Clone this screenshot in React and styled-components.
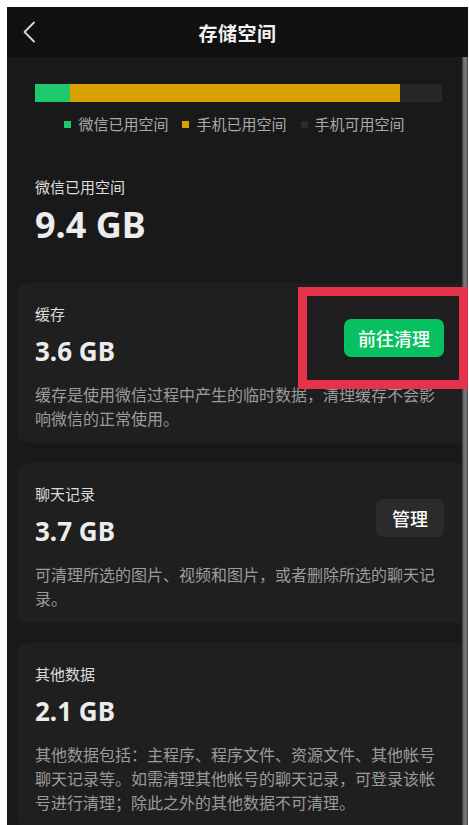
import React from "react";
import styled, { createGlobalStyle } from "styled-components";

const GlobalStyle = createGlobalStyle`
    html, body {
        margin: 0;
        padding: 0;
        background: #ffffff;
    }
    body {
        font-family: "Noto Sans CJK SC", "Noto Sans", sans-serif;
    }
`;

const cards = [
    {
        title: "缓存",
        size: "3.6 GB",
        desc: "缓存是使用微信过程中产生的临时数据，清理缓存不会影响微信的正常使用。",
        action: "前往清理",
        primary: true,
        marked: true,
    },
    {
        title: "聊天记录",
        size: "3.7 GB",
        desc: "可清理所选的图片、视频和图片，或者删除所选的聊天记录。",
        action: "管理",
    },
    {
        title: "其他数据",
        size: "2.1 GB",
        desc: "其他数据包括：主程序、程序文件、资源文件、其他帐号聊天记录等。如需清理其他帐号的聊天记录，可登录该帐号进行清理；除此之外的其他数据不可清理。",
    },
];

const legend = [
    { color: "#1ec96b", label: "微信已用空间" },
    { color: "#d9a100", label: "手机已用空间" },
    { color: "#2a2a2a", label: "手机可用空间" },
];

function BackIcon() {
    return (
        <svg width="14" height="22" viewBox="0 0 14 22" fill="none">
            <path d="M12 1.5 L2.5 11 L12 20.5" stroke="#dcdcdc" strokeWidth="1.8" strokeLinecap="round" strokeLinejoin="round" />
        </svg>
    );
}

function StorageCard({ item }) {
    return (
        <Card>
            <CardTop>
                <Info>
                    <CardTitle>{item.title}</CardTitle>
                    <CardSize>{item.size}</CardSize>
                </Info>
                {item.action && <ActionButton $primary={item.primary}>{item.action}</ActionButton>}
            </CardTop>
            <Desc>{item.desc}</Desc>
            {item.marked && <Highlight />}
        </Card>
    );
}

export default function App() {
    return (
        <>
            <GlobalStyle />
            <Frame>
                <Header>
                    <BackButton>
                        <BackIcon />
                    </BackButton>
                    <Title>存储空间</Title>
                </Header>
                <Body>
                    <Content>
                        <Summary>
                            <Bar>
                                <Segment $color="#1ec96b" style={{ width: "8.6%" }} />
                                <Segment $color="#d9a100" style={{ width: "81.1%" }} />
                            </Bar>
                            <Legend>
                                {legend.map((l) => (
                                    <LegendItem key={l.label}>
                                        <Dot $color={l.color} />
                                        {l.label}
                                    </LegendItem>
                                ))}
                            </Legend>
                            <UsedLabel>微信已用空间</UsedLabel>
                            <UsedValue>9.4 GB</UsedValue>
                        </Summary>
                        <CardList>
                            {cards.map((c) => (
                                <StorageCard key={c.title} item={c} />
                            ))}
                        </CardList>
                    </Content>
                    <Scrollbar />
                </Body>
            </Frame>
        </>
    );
}

const Frame = styled.div`
    margin: 7px 1px 0 7px;
    height: 818px;
    overflow: hidden;
    display: flex;
    flex-direction: column;
    background: #191919;
`;
const Header = styled.div`
    height: 50px;
    flex-shrink: 0;
    background: #111111;
    display: flex;
    align-items: center;
    justify-content: center;
    position: relative;
`;
const BackButton = styled.div`
    position: absolute;
    left: 15px;
    top: 14px;
    display: flex;
`;
const Title = styled.div`
    color: #f2f2f2;
    font-size: 19px;
    font-weight: 700;
    letter-spacing: 0.5px;
`;
const Body = styled.div`
    flex: 1;
    display: flex;
    min-height: 0;
`;
const Content = styled.div`
    flex: 1;
    padding-left: 10px;
    min-width: 0;
`;
const Scrollbar = styled.div`
    width: 6px;
    flex-shrink: 0;
    background: linear-gradient(90deg, #3a3a3a 0, #6e6e6e 30%, #7a7a7a 60%, #4a4a4a 100%);
`;
const Summary = styled.div`
    padding: 27px 20px 0 18px;
`;
const Bar = styled.div`
    height: 18px;
    display: flex;
    background: #262626;
`;
const Segment = styled.div`
    height: 100%;
    background: ${(p) => p.$color};
`;
const Legend = styled.div`
    margin-top: 12px;
    display: flex;
    justify-content: center;
    gap: 14px;
    line-height: 20px;
    font-size: 15px;
    color: #a9a9a9;
    padding-right: 8px;
`;
const LegendItem = styled.div`
    display: flex;
    align-items: center;
    gap: 7px;
`;
const Dot = styled.span`
    width: 7px;
    height: 7px;
    background: ${(p) => p.$color};
`;
const UsedLabel = styled.div`
    margin-top: 43px;
    font-size: 15px;
    line-height: 20px;
    color: #dedede;
`;
const UsedValue = styled.div`
    margin-top: 8px;
    font-family: "Noto Sans", "Noto Sans CJK SC", sans-serif;
    font-size: 36px;
    line-height: 40px;
    font-weight: 700;
    color: #ececec;
`;
const CardList = styled.div`
    margin-top: 38px;
    display: flex;
    flex-direction: column;
    gap: 20px;
`;
const Card = styled.div`
    position: relative;
    background: #1f1f1f;
    border-radius: 10px 0 0 10px;
    padding: 21px 18px 13px 18px;
`;
const CardTop = styled.div`
    display: flex;
    align-items: center;
    justify-content: space-between;
`;
const Info = styled.div`
    display: flex;
    flex-direction: column;
`;
const CardTitle = styled.div`
    font-size: 15px;
    line-height: 20px;
    color: #dcdcdc;
`;
const CardSize = styled.div`
    margin-top: 10px;
    font-family: "Noto Sans", "Noto Sans CJK SC", sans-serif;
    font-size: 26px;
    line-height: 34px;
    font-weight: 700;
    color: #ececec;
`;
const ActionButton = styled.div`
    height: 38px;
    padding: 0 ${(p) => (p.$primary ? "14px" : "16px")};
    border-radius: 7px;
    display: flex;
    align-items: center;
    font-size: 18px;
    font-weight: 500;
    color: #ffffff;
    background: ${(p) => (p.$primary ? "#07c160" : "#2b2b2b")};
    margin-top: 4px;
`;
const Desc = styled.div`
    margin-top: 14px;
    font-size: 16px;
    line-height: 24px;
    letter-spacing: 0;
    color: #9b9b9b;
`;
const Highlight = styled.div`
    position: absolute;
    left: 281px;
    top: 4px;
    width: 170px;
    height: 102px;
    box-sizing: border-box;
    border: 9px solid #e6334b;
    pointer-events: none;
`;
